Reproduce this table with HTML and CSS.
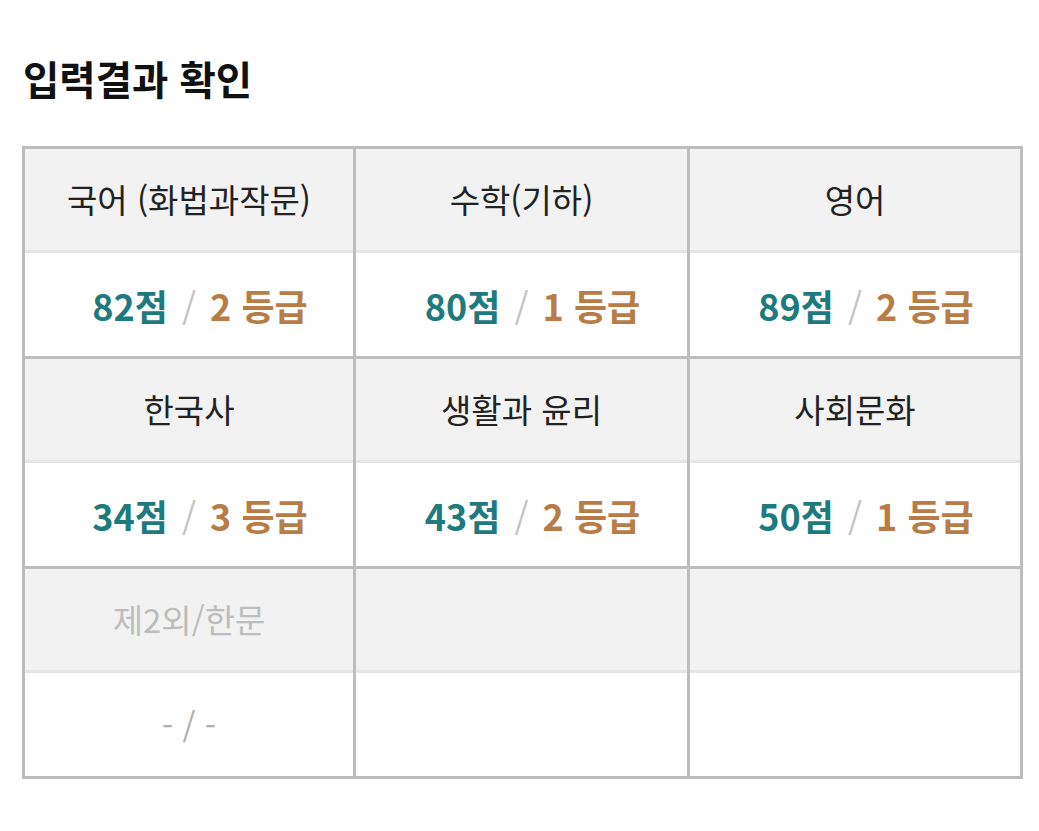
FILE: index.html
```html
<!DOCTYPE html>
<html lang="ko">
<head>
<meta charset="utf-8">
<link rel="stylesheet" href="styles.css">
</head>
<body>
<main class="page">
  <h1 class="title">입력결과 확인</h1>
  <div class="board">
    <div class="cell">
      <div class="head">국어 (화법과작문)</div>
      <div class="score"><span class="val"><span class="pt">82점</span><span class="sl">/</span><span class="gr">2 등급</span></span></div>
    </div>
    <div class="cell">
      <div class="head">수학(기하)</div>
      <div class="score"><span class="val"><span class="pt">80점</span><span class="sl">/</span><span class="gr">1 등급</span></span></div>
    </div>
    <div class="cell">
      <div class="head">영어</div>
      <div class="score"><span class="val"><span class="pt">89점</span><span class="sl">/</span><span class="gr">2 등급</span></span></div>
    </div>
    <div class="cell">
      <div class="head">한국사</div>
      <div class="score"><span class="val"><span class="pt">34점</span><span class="sl">/</span><span class="gr">3 등급</span></span></div>
    </div>
    <div class="cell">
      <div class="head">생활과 윤리</div>
      <div class="score"><span class="val"><span class="pt">43점</span><span class="sl">/</span><span class="gr">2 등급</span></span></div>
    </div>
    <div class="cell">
      <div class="head">사회문화</div>
      <div class="score"><span class="val"><span class="pt">50점</span><span class="sl">/</span><span class="gr">1 등급</span></span></div>
    </div>
    <div class="cell">
      <div class="head muted">제2외/한문</div>
      <div class="score"><span class="empty">- / -</span></div>
    </div>
    <div class="cell">
      <div class="head"></div>
      <div class="score"></div>
    </div>
    <div class="cell">
      <div class="head"></div>
      <div class="score"></div>
    </div>
  </div>
</main>
</body>
</html>
```
FILE: styles.css
```css
* { box-sizing: border-box; }
html, body { margin: 0; padding: 0; background: #fff; }
body {
  font-family: "Noto Sans CJK KR", "Noto Sans", sans-serif;
  color: #222;
}
.page {
  padding: 54px 16px 0 22px;
}
.title {
  margin: 0 0 44px 1px;
  font-size: 39.5px;
  font-weight: 700;
  line-height: 48px;
  color: #111;
}
.board {
  width: 1001px;
  display: grid;
  grid-template-columns: 328px 331px 330px;
  gap: 3px;
  padding: 3px;
  background: #bdbdbd;
}
.cell {
  display: flex;
  flex-direction: column;
  background: #fff;
}
.head {
  height: 104px;
  display: flex;
  align-items: center;
  justify-content: center;
  background: #f2f2f2;
  border-bottom: 3px solid #e6e6e6;
  font-size: 33px;
  color: #222;
  padding-bottom: 2px;
}
.head.muted { color: #bdbdbd; }
.score {
  height: 103px;
  display: flex;
  align-items: center;
  justify-content: center;
  font-size: 36px;
  font-weight: 700;
}
.val { padding-left: 22px; }
.pt { color: #1e7b7d; }
.gr { color: #b87d47; }
.sl { color: #c4c4c4; font-weight: 400; margin: 0 14px; }
.empty { color: #b0b0b0; font-weight: 400; font-size: 33px; }
```
